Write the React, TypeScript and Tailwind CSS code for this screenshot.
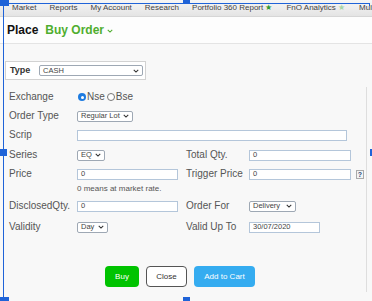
import React from "react";

const Chevron = ({ className = "" }: { className?: string }) => (
  <svg viewBox="0 0 8 5" className={className} width="6" height="4">
    <path d="M1 1 L4 4 L7 1" fill="none" stroke="currentColor" strokeWidth="1.4" />
  </svg>
);

const Select = ({ text, w }: { text: string; w: string }) => (
  <div
    className={`${w} h-[11px] flex items-center justify-between border border-[#9ea8b4] rounded-[2px] bg-white pl-[3px] pr-[3px] text-[7.5px] text-[#444] leading-none`}
  >
    <span>{text}</span>
    <Chevron className="text-[#333]" />
  </div>
);

const Input = ({ text = "", w }: { text?: string; w: string }) => (
  <div
    className={`${w} h-[11px] flex items-center border border-[#b4c6da] bg-white pl-[3px] text-[7.5px] text-[#444] leading-none`}
  >
    {text}
  </div>
);

const Label = ({ children, w }: { children: React.ReactNode; w: string }) => (
  <div className={`${w} shrink-0 text-[10px] text-[#555] leading-none`}>{children}</div>
);

export default function App() {
  return (
    <div
      className="relative w-[372px] h-[301px] overflow-hidden bg-[#f8f8f8]"
      style={{ fontFamily: '"Liberation Sans", Arial, sans-serif' }}
    >
      {/* nav */}
      <div className="h-[17px] flex items-center gap-[13px] pl-[12px] bg-gradient-to-b from-[#f6f6f6] to-[#e4e4e4] border-b border-[#d6d6d6] text-[8px] text-[#444] whitespace-nowrap">
        <span>Market</span>
        <span>Reports</span>
        <span>My Account</span>
        <span>Research</span>
        <span>
          Portfolio 360 Report <span className="text-[#2f9a2f] text-[8px]">★</span>
        </span>
        <span className="ml-[1px]">
          FnO Analytics <span className="text-[#a6d6a6] text-[8px]">★</span>
        </span>
        <span className="ml-[1px]">Multi</span>
      </div>

      {/* header */}
      <div className="h-[27px] flex items-center pl-[7px] bg-[#fdfdfd] border-b border-[#e4e4e4]">
        <span className="text-[12px] font-bold text-[#111]">Place</span>
        <span className="ml-[7px] text-[12px] font-bold text-[#4fae2e]">Buy Order</span>
        <Chevron className="ml-[3px] mt-[2px] text-[#4fae2e]" />
      </div>

      {/* type box */}
      <div className="mt-[17px] ml-[5px] w-[141px] h-[19px] flex items-center border border-[#d2d2d2] bg-white pl-[4px]">
        <span className="w-[29px] text-[9px] font-bold text-[#333]">Type</span>
        <Select text="CASH" w="w-[104px]" />
      </div>

      {/* panel */}
      <div className="mt-[7px] w-[367px] h-[205px] border-r border-[#dedede] pl-[9px]">
        <div className="h-[20px] flex items-center">
          <Label w="w-[68px]">Exchange</Label>
          <span className="ml-[1px] w-[8px] h-[8px] rounded-full bg-[#1d7be0] flex items-center justify-center">
            <span className="w-[3px] h-[3px] rounded-full bg-white" />
          </span>
          <span className="ml-[1px] text-[10px] text-[#555] leading-none">Nse</span>
          <span className="ml-[2px] w-[8px] h-[8px] rounded-full border border-[#777] bg-white" />
          <span className="ml-[1px] text-[10px] text-[#555] leading-none">Bse</span>
        </div>
        <div className="h-[18px] flex items-center">
          <Label w="w-[68px]">Order Type</Label>
          <Select text="Regular Lot" w="w-[56px]" />
        </div>
        <div className="h-[20px] flex items-center">
          <Label w="w-[68px]">Scrip</Label>
          <Input w="w-[270px]" />
        </div>
        <div className="h-[20px] flex items-center">
          <Label w="w-[68px]">Series</Label>
          <div className="w-[109px]">
            <Select text="EQ" w="w-[28px]" />
          </div>
          <Label w="w-[63px]">Total Qty.</Label>
          <Input text="0" w="w-[102px]" />
        </div>
        <div className="h-[18px] flex items-center">
          <Label w="w-[68px]">Price</Label>
          <div className="w-[109px]">
            <Input text="0" w="w-[101px]" />
          </div>
          <Label w="w-[63px]">Trigger Price</Label>
          <Input text="0" w="w-[102px]" />
          <span className="ml-[5px] w-[8px] h-[9px] border border-[#aaa] bg-[#f4f4f4] flex items-center justify-center text-[7px] font-bold text-[#2a4a7a] leading-none">
            ?
          </span>
        </div>
        <div className="h-[12px] flex items-center pl-[68px] text-[8px] text-[#555] leading-none">
          0 means at market rate.
        </div>
        <div className="h-[22px] flex items-center">
          <Label w="w-[68px]">DisclosedQty.</Label>
          <div className="w-[109px]">
            <Input text="0" w="w-[101px]" />
          </div>
          <Label w="w-[63px]">Order For</Label>
          <Select text="Delivery" w="w-[47px]" />
        </div>
        <div className="h-[20px] flex items-center">
          <Label w="w-[68px]">Validity</Label>
          <div className="w-[109px]">
            <Select text="Day" w="w-[31px]" />
          </div>
          <Label w="w-[63px]">Valid Up To</Label>
          <Input text="30/07/2020" w="w-[71px]" />
        </div>

        <div className="mt-[29px] flex items-center gap-[7px] pl-[96px]">
          <button className="w-[34px] h-[21px] rounded-[4px] bg-[#00c300] text-white text-[8px] leading-none">
            Buy
          </button>
          <button className="w-[41px] h-[21px] rounded-[4px] bg-white border border-[#555] text-[#333] text-[8px] leading-none">
            Close
          </button>
          <button className="w-[61px] h-[21px] rounded-[4px] bg-[#35acf0] text-white text-[8px] leading-none">
            Add to Cart
          </button>
        </div>
      </div>

      {/* selection overlay */}
      <div className="absolute left-[3px] top-0 w-[1px] h-[298px] bg-[#1f63d8]" />
      <div className="absolute left-[3px] top-[3px] w-[367px] h-[1px] bg-[#1f63d8]" />
      <div className="absolute left-[369px] top-[3px] w-[1px] h-[3px] bg-[#1f63d8]" />
      <div className="absolute left-0 top-0 w-[9px] h-[6px] bg-[#1f63d8]" />
      <div className="absolute left-[183px] top-0 w-[7px] h-[4px] bg-[#1f63d8]" />
      <div className="absolute left-0 top-[149px] w-[7px] h-[7px] bg-[#1f63d8]" />
      <div className="absolute left-[370px] top-[149px] w-[2px] h-[7px] bg-[#1f63d8]" />
      <div className="absolute left-0 top-[297px] w-[9px] h-[4px] bg-[#1f63d8]" />
      <div className="absolute left-[183px] top-[297px] w-[7px] h-[4px] bg-[#1f63d8]" />
    </div>
  );
}
